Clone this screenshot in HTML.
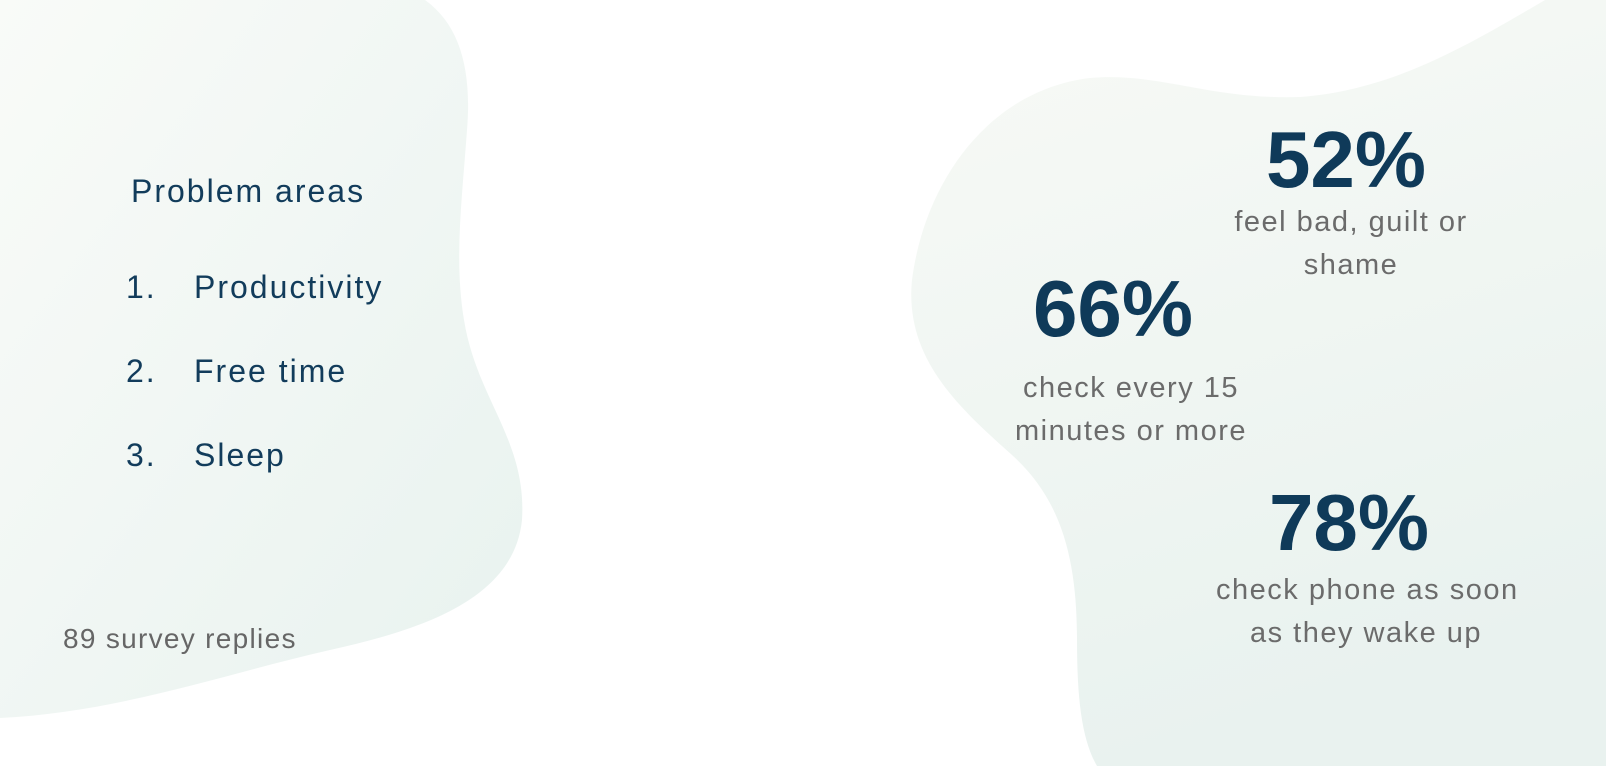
<!DOCTYPE html>
<html><head><meta charset="utf-8"><style>
html,body{margin:0;padding:0;width:1606px;height:766px;overflow:hidden;background:#fff;font-family:"Liberation Sans",sans-serif}
.t{position:absolute;white-space:nowrap}
.navy{color:#123c5b;font-size:32px;letter-spacing:2px}
.big{font-weight:bold;font-size:80px;color:#0f3a59;text-align:center;line-height:80px}
.cap{font-size:29px;letter-spacing:1.5px;color:#6b6b6b;text-align:center;line-height:43px}
</style></head><body>
<svg width="1606" height="766" style="position:absolute;left:0;top:0">
<defs>
<linearGradient id="g1" x1="0" y1="0" x2="1" y2="1"><stop offset="0" stop-color="#f9fbf8"/><stop offset="1" stop-color="#e8f2ef"/></linearGradient>
<linearGradient id="g2" x1="0" y1="0" x2="0.3" y2="1"><stop offset="0" stop-color="#f8faf6"/><stop offset="1" stop-color="#e9f2ef"/></linearGradient>
</defs>
<path d="M0,0 L425,0 C460,25 472,70 467,130 C462,200 454,260 464,320 C477,400 527,440 522,520 C514,600 420,630 330,650 C220,675 120,712 0,718 Z" fill="url(#g1)"/>
<path d="M1545,0 C1460,50 1390,90 1300,97 C1210,100 1160,72 1090,78 C990,90 925,180 912,280 C904,360 962,410 1012,455 C1062,500 1077,560 1077,640 C1077,700 1082,740 1097,766 L1606,766 L1606,0 Z" fill="url(#g2)"/>
</svg>
<div class="t navy" style="left:131px;top:173px">Problem areas</div>
<div class="t navy" style="left:126px;top:269px">1.</div>
<div class="t navy" style="left:194px;top:269px">Productivity</div>
<div class="t navy" style="left:126px;top:353px">2.</div>
<div class="t navy" style="left:194px;top:353px">Free time</div>
<div class="t navy" style="left:126px;top:437px">3.</div>
<div class="t navy" style="left:194px;top:437px">Sleep</div>
<div class="t" style="left:63px;top:623px;font-size:28px;letter-spacing:1.3px;color:#666">89 survey replies</div>

<div class="t big" style="left:1196px;width:300px;top:120px">52%</div>
<div class="t cap" style="left:1201px;width:300px;top:201px">feel bad, guilt or<br>shame</div>
<div class="t big" style="left:963px;width:300px;top:269px">66%</div>
<div class="t cap" style="left:981px;width:300px;top:367px">check every 15<br>minutes or more</div>
<div class="t big" style="left:1199px;width:300px;top:483px">78%</div>
<div class="t cap" style="left:1216px;width:300px;top:569px">check phone as soon<br>as they wake up</div>
</body></html>
